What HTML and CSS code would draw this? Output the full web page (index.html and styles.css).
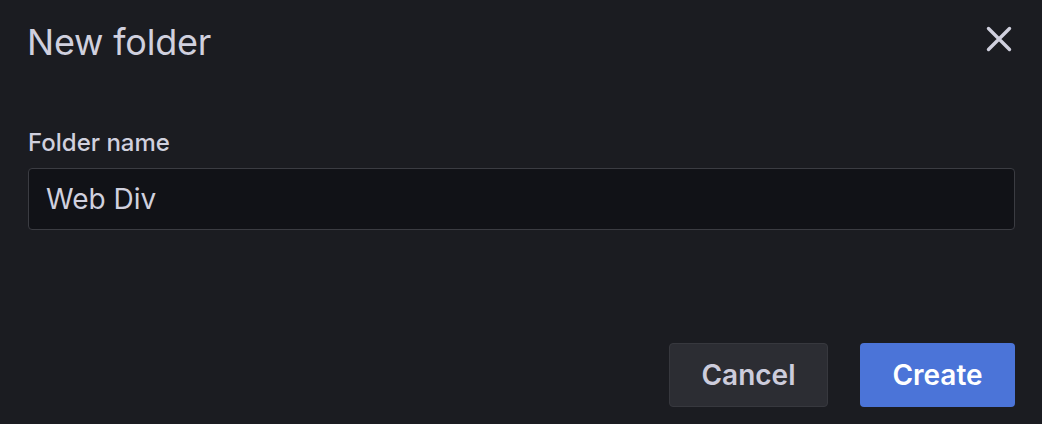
FILE: index.html
```html
<!DOCTYPE html>
<html>
<head>
<meta charset="utf-8">
<link rel="stylesheet" href="styles.css">
</head>
<body>
<div class="modal">
  <div class="header">
    <h2 class="title">New folder</h2>
    <button class="close" aria-label="Close">
      <svg width="26" height="26" viewBox="0 0 26 26"><path d="M2.5 2.5 L23.5 23.5 M23.5 2.5 L2.5 23.5" stroke="#d0d0de" stroke-width="3.4" stroke-linecap="round"/></svg>
    </button>
  </div>
  <div class="field">
    <label class="label">Folder name</label>
    <div class="input">Web Div</div>
  </div>
  <div class="actions">
    <button class="btn btn-secondary">Cancel</button>
    <button class="btn btn-primary">Create</button>
  </div>
</div>
</body>
</html>
```
FILE: styles.css
```css
html, body {
  margin: 0;
  padding: 0;
  background: #1b1c21;
  height: 100%;
}
body {
  font-family: Inter, "Noto Sans", sans-serif;
  color: #ccccdc;
}
.modal {
  padding: 20px 27px 0 27px;
  display: flex;
  flex-direction: column;
}
.header {
  display: flex;
  justify-content: space-between;
  align-items: center;
  height: 44px;
}
.title {
  margin: 0;
  font-size: 36px;
  font-weight: 400;
  line-height: 44px;
  color: #d0d0de;
  letter-spacing: -0.2px;
}
.close {
  background: none;
  border: none;
  padding: 0;
  margin-right: 3px;
  margin-top: -6px;
  width: 26px;
  height: 26px;
  display: flex;
}
.field {
  margin-top: 64px;
  display: flex;
  flex-direction: column;
}
.label {
  font-size: 24px;
  font-weight: 500;
  line-height: 30px;
  color: #d0d0de;
  padding-left: 1px;
}
.input {
  margin-top: 10px;
  margin-left: 1px;
  height: 62px;
  box-sizing: border-box;
  border: 1.5px solid #3b3c42;
  border-radius: 4px;
  background: #111217;
  padding: 0 17px;
  display: flex;
  align-items: center;
  font-size: 28px;
  color: #d0d0de;
}
.actions {
  margin-top: 113px;
  display: flex;
  justify-content: flex-end;
  gap: 32px;
}
.btn {
  height: 64px;
  border-radius: 4px;
  font-family: Inter, "Noto Sans", sans-serif;
  font-size: 28px;
  font-weight: 600;
  padding: 0;
  box-sizing: border-box;
}
.btn-secondary {
  width: 159px;
  background: #2c2d33;
  border: 1.5px solid #37383e;
  color: #ccccdc;
}
.btn-primary {
  width: 155px;
  background: #4b74d8;
  border: none;
  color: #ffffff;
}
```
